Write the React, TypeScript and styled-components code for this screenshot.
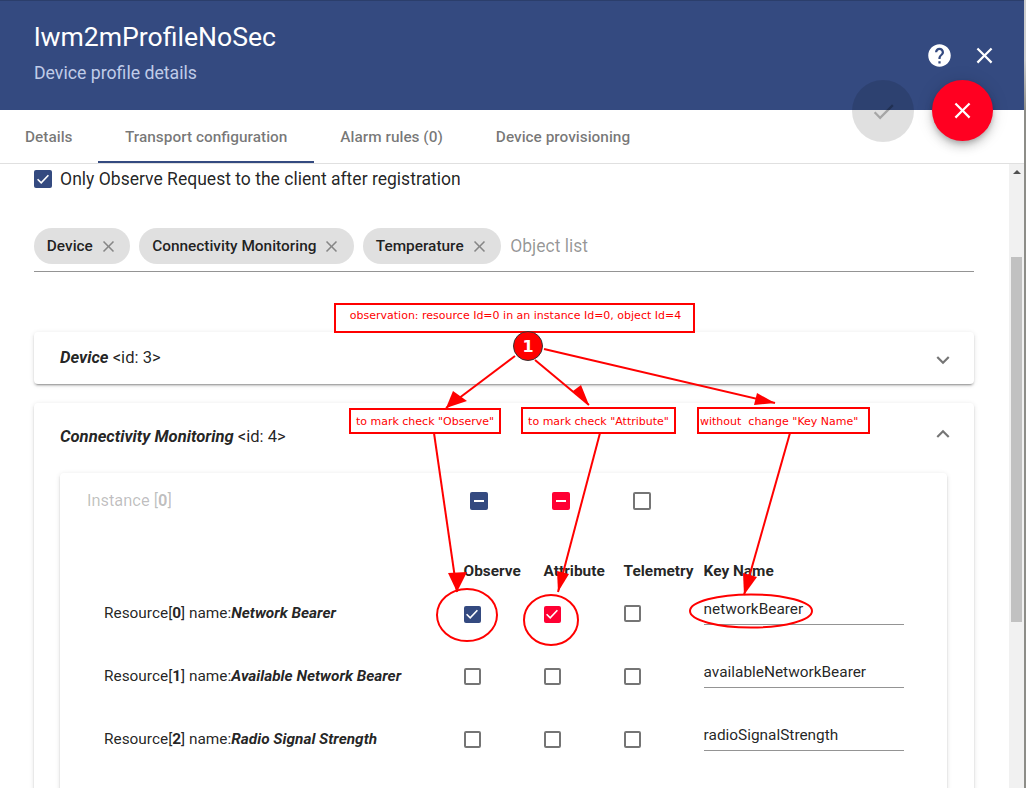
import styled, { createGlobalStyle } from "styled-components";
import { MdCheck, MdClose, MdExpandLess, MdExpandMore, MdHelp } from "react-icons/md";

const PRIMARY = "#344a80";
const ACCENT = "#ff0033";
const MARK = "#ff0000";

const GlobalStyle = createGlobalStyle`
  html, body {
    margin: 0;
    padding: 0;
    background: #fff;
    overflow: hidden;
  }
  * {
    box-sizing: border-box;
  }
`;

const Page = styled.div`
  position: relative;
  width: 1026px;
  height: 788px;
  display: flex;
  overflow: hidden;
  font-family: Roboto, "Liberation Sans", sans-serif;
  color: rgba(0, 0, 0, 0.87);
`;

const Dialog = styled.div`
  flex: 1;
  min-width: 0;
  display: flex;
  flex-direction: column;
`;

const EdgeStrip = styled.div`
  flex: 0 0 2px;
  background: linear-gradient(#cdcdcd 0, #cdcdcd 60px, #8d8d88 110px, #8d8d88 100%);
`;

const Header = styled.header`
  flex: 0 0 110px;
  background: ${PRIMARY};
  border-top: 1px solid #2b3e6b;
  display: flex;
  justify-content: space-between;
  padding: 19px 26px 0 34px;
  color: #fff;
`;

const Title = styled.h1`
  margin: 0;
  font-size: 26.6px;
  line-height: 34px;
  font-weight: 400;
`;

const Subtitle = styled.div`
  margin-top: 7px;
  font-size: 17.7px;
  line-height: 24px;
  color: #c0cce8;
`;

const HeaderActions = styled.div`
  display: flex;
  align-items: center;
  gap: 18px;
  height: 27px;
  margin-top: 22px;
  font-size: 27px;
`;

const Tabs = styled.nav`
  flex: 0 0 54px;
  display: flex;
  border-bottom: 1px solid #e0e0e0;
`;

const Tab = styled.div<{ $active?: boolean }>`
  height: 53px;
  padding: 2px 26.5px 0;
  display: flex;
  align-items: center;
  font-size: 15.4px;
  font-weight: 500;
  color: rgba(0, 0, 0, 0.54);
  border-bottom: 2px solid ${(p) => (p.$active ? PRIMARY : "transparent")};
  &:first-child {
    padding: 2px 26px 0 25px;
  }
`;

const Body = styled.main`
  flex: 1;
  min-height: 0;
  display: flex;
`;

const Content = styled.div`
  flex: 1;
  min-width: 0;
  overflow: hidden;
  padding: 6px 35px 0 34px;
`;

const Scrollbar = styled.div`
  flex: 0 0 15px;
  background: #f1f1f1;
  padding: 0 2px;
`;

const ScrollArrow = styled.div`
  width: 0;
  height: 0;
  margin: 6px auto 0;
  border-left: 4px solid transparent;
  border-right: 4px solid transparent;
  border-bottom: 4px solid #505050;
`;

const ScrollThumb = styled.div`
  height: 365px;
  margin-top: 83px;
  background: #c1c1c1;
`;

const CheckRow = styled.label`
  display: flex;
  align-items: center;
  gap: 8.5px;
  height: 18px;
  font-size: 17.55px;
`;

const Box = styled.span<{ $color?: string }>`
  flex: none;
  width: 17.6px;
  height: 17.6px;
  display: inline-flex;
  align-items: center;
  justify-content: center;
  border-radius: 2px;
  border: ${(p) => (p.$color ? "none" : "2px solid rgba(0, 0, 0, 0.54)")};
  background: ${(p) => p.$color ?? "transparent"};
`;

const Dash = styled.span`
  width: 10px;
  height: 2px;
  background: #fff;
`;

const Tick = () => (
  <svg width="14" height="14" viewBox="0 0 14 14" fill="none">
    <path d="M1.6 7.2 L5.2 10.8 L12.4 3.2" stroke="#fff" strokeWidth="1.6" />
  </svg>
);

const ChipField = styled.div`
  display: flex;
  align-items: center;
  gap: 9px;
  margin-top: 40px;
  padding-bottom: 7px;
  border-bottom: 1px solid rgba(0, 0, 0, 0.42);
`;

const Chip = styled.span`
  height: 36px;
  padding: 0 12.5px 0 12.8px;
  display: inline-flex;
  align-items: center;
  gap: 6px;
  border-radius: 18px;
  background: #e0e0e0;
  font-size: 15.4px;
  font-weight: 500;
  svg {
    font-size: 19px;
    color: rgba(0, 0, 0, 0.4);
  }
`;

const ChipPlaceholder = styled.span`
  font-size: 17.5px;
  color: rgba(0, 0, 0, 0.42);
`;

const Panel = styled.section<{ $first?: boolean }>`
  margin-top: ${(p) => (p.$first ? "60px" : "19px")};
  background: #fff;
  border-radius: 4px;
  box-shadow: 0 3px 1px -2px rgba(0, 0, 0, 0.2), 0 2px 2px 0 rgba(0, 0, 0, 0.14),
    0 1px 5px 0 rgba(0, 0, 0, 0.12);
`;

const PanelHeader = styled.div<{ $tall?: boolean }>`
  height: ${(p) => (p.$tall ? "66px" : "52px")};
  margin-bottom: ${(p) => (p.$tall ? "4px" : "0")};
  padding: 0 18px ${(p) => (p.$tall ? "0" : "2px")} 26px;
  display: flex;
  align-items: center;
  justify-content: space-between;
  font-size: 16.6px;
  svg {
    font-size: 26px;
    color: rgba(0, 0, 0, 0.54);
    margin: ${(p) => (p.$tall ? "0 0 4px" : "6px 0 0")};
  }
`;

const PanelName = styled.b`
  font-style: italic;
  font-weight: 700;
`;

const InnerCard = styled.div`
  margin: 0 27px 0 26px;
  height: 400px;
  border-radius: 4px;
  box-shadow: 0 3px 1px -2px rgba(0, 0, 0, 0.2), 0 2px 2px 0 rgba(0, 0, 0, 0.14),
    0 1px 5px 0 rgba(0, 0, 0, 0.12);
`;

const InstanceRow = styled.div`
  height: 56px;
  display: grid;
  grid-template-columns: 383px 82px 81px auto;
  align-items: center;
  padding-left: 27px;
  font-size: 16.4px;
  color: rgba(0, 0, 0, 0.26);
`;

const InstanceLabel = styled.span`
  padding-bottom: 2px;
`;

const ColumnHead = styled.div`
  display: grid;
  grid-template-columns: 80px 80px 80px 200px;
  margin: 30px 0 0 403.6px;
  height: 24px;
  align-items: center;
  font-size: 15.4px;
  font-weight: 700;
`;

const ResourceRow = styled.div`
  display: grid;
  grid-template-columns: 359.6px 80px 80px 80px 200px;
  align-items: center;
  height: 63px;
  padding-left: 44px;
  font-size: 15.4px;
`;

const ResourceLabel = styled.span`
  padding-bottom: 4px;
`;

const Boxed = styled.span`
  padding-top: 2px;
`;

const KeyInput = styled.div`
  height: 25px;
  margin-top: -5px;
  line-height: 19px;
  font-size: 15.4px;
  border-bottom: 1px solid rgba(0, 0, 0, 0.42);
`;

const Fab = styled.div<{ $size: number; $left: number; $disabled?: boolean }>`
  position: absolute;
  top: 80px;
  left: ${(p) => p.$left}px;
  width: ${(p) => p.$size}px;
  height: ${(p) => p.$size}px;
  border-radius: 50%;
  display: flex;
  align-items: center;
  justify-content: center;
  font-size: 27px;
  background: ${(p) => (p.$disabled ? "rgba(0, 0, 0, 0.12)" : "#ff0021")};
  color: ${(p) => (p.$disabled ? "rgba(0, 0, 0, 0.26)" : "#fff")};
  box-shadow: ${(p) =>
    p.$disabled
      ? "none"
      : "0 3px 5px -1px rgba(0,0,0,.2), 0 6px 10px 0 rgba(0,0,0,.14), 0 1px 18px 0 rgba(0,0,0,.12)"};
`;

const Note = styled.div<{
  $x: number;
  $y: number;
  $w: number;
  $h: number;
  $raise?: number;
  $drop?: number;
  $pad?: number;
  $start?: boolean;
}>`
  position: absolute;
  left: ${(p) => p.$x}px;
  top: ${(p) => p.$y}px;
  width: ${(p) => p.$w}px;
  height: ${(p) => p.$h}px;
  padding: ${(p) => p.$drop ?? 0}px 0 ${(p) => p.$raise ?? 0}px ${(p) => p.$pad ?? 0}px;
  border: 2px solid ${MARK};
  background: #fff;
  display: flex;
  align-items: center;
  justify-content: ${(p) => (p.$start ? "flex-start" : "center")};
  font-family: "DejaVu Sans", sans-serif;
  font-size: 11px;
  color: ${MARK};
  white-space: pre;
`;

const NoteNumber = styled.div`
  position: absolute;
  left: 513px;
  top: 331px;
  width: 30px;
  height: 30px;
  border-radius: 50%;
  border: 1.5px solid #333;
  background: ${MARK};
  color: #fff;
  display: flex;
  align-items: center;
  justify-content: center;
  font-family: "DejaVu Sans", sans-serif;
  font-size: 16px;
  font-weight: 700;
`;

const Overlay = styled.svg`
  position: absolute;
  inset: 0;
  pointer-events: none;
`;

// line start, tip, and the two corners of the arrow head
const arrows = [
  { from: [515, 356], to: [446, 408], head: "453,391 467,401" },
  { from: [535, 360], to: [589, 405], head: "573,391 581,385" },
  { from: [544, 349], to: [775, 403], head: "757,393 754,405" },
  { from: [434, 433], to: [457, 592], head: "448,573 467,572" },
  { from: [600, 433], to: [558, 592], head: "557,571 569,574" },
  { from: [790, 433], to: [744, 595], head: "743,573 757,577" },
];

const rings = [
  { cx: 467, cy: 615, rx: 30, ry: 26 },
  { cx: 551, cy: 620, rx: 27, ry: 25 },
  { cx: 751, cy: 611, rx: 61, ry: 16.5 },
];

const resources = [
  { id: 0, name: "Network Bearer", key: "networkBearer", checked: true },
  { id: 1, name: "Available Network Bearer", key: "availableNetworkBearer", checked: false },
  { id: 2, name: "Radio Signal Strength", key: "radioSignalStrength", checked: false },
];

export default function App() {
  return (
    <Page>
      <GlobalStyle />
      <Dialog>
        <Header>
          <div>
            <Title>lwm2mProfileNoSec</Title>
            <Subtitle>Device profile details</Subtitle>
          </div>
          <HeaderActions>
            <MdHelp />
            <MdClose />
          </HeaderActions>
        </Header>
        <Tabs>
          <Tab>Details</Tab>
          <Tab $active>Transport configuration</Tab>
          <Tab>Alarm rules (0)</Tab>
          <Tab>Device provisioning</Tab>
        </Tabs>
        <Body>
          <Content>
            <CheckRow>
              <Box $color={PRIMARY}>
                <Tick />
              </Box>
              Only Observe Request to the client after registration
            </CheckRow>
            <ChipField>
              {["Device", "Connectivity Monitoring", "Temperature"].map((name) => (
                <Chip key={name}>
                  {name}
                  <MdClose />
                </Chip>
              ))}
              <ChipPlaceholder>Object list</ChipPlaceholder>
            </ChipField>
            <Panel $first>
              <PanelHeader>
                <span>
                  <PanelName>Device</PanelName> &lt;id: 3&gt;
                </span>
                <MdExpandMore />
              </PanelHeader>
            </Panel>
            <Panel>
              <PanelHeader $tall>
                <span>
                  <PanelName>Connectivity Monitoring</PanelName> &lt;id: 4&gt;
                </span>
                <MdExpandLess />
              </PanelHeader>
              <InnerCard>
                <InstanceRow>
                  <InstanceLabel>
                    Instance [<b>0</b>]
                  </InstanceLabel>
                  <Box $color={PRIMARY}>
                    <Dash />
                  </Box>
                  <Box $color={ACCENT}>
                    <Dash />
                  </Box>
                  <Box />
                </InstanceRow>
                <ColumnHead>
                  <span>Observe</span>
                  <span>Attribute</span>
                  <span>Telemetry</span>
                  <span>Key Name</span>
                </ColumnHead>
                {resources.map((r) => (
                  <ResourceRow key={r.id}>
                    <ResourceLabel>
                      Resource[<b>{r.id}</b>] name:
                      <PanelName>{r.name}</PanelName>
                    </ResourceLabel>
                    <Boxed>
                      <Box $color={r.checked ? PRIMARY : undefined}>{r.checked && <Tick />}</Box>
                    </Boxed>
                    <Boxed>
                      <Box $color={r.checked ? ACCENT : undefined}>{r.checked && <Tick />}</Box>
                    </Boxed>
                    <Boxed>
                      <Box />
                    </Boxed>
                    <KeyInput>{r.key}</KeyInput>
                  </ResourceRow>
                ))}
              </InnerCard>
            </Panel>
          </Content>
          <Scrollbar>
            <ScrollArrow />
            <ScrollThumb />
          </Scrollbar>
        </Body>
      </Dialog>
      <EdgeStrip />

      <Fab $size={62} $left={852} $disabled>
        <MdCheck />
      </Fab>
      <Fab $size={61} $left={932}>
        <MdClose />
      </Fab>

      <Overlay width="1026" height="788" viewBox="0 0 1026 788">
        {arrows.map((a) => (
          <g key={a.to.join()}>
            <line
              x1={a.from[0]}
              y1={a.from[1]}
              x2={a.to[0]}
              y2={a.to[1]}
              stroke={MARK}
              strokeWidth="2"
            />
            <polygon points={`${a.to[0]},${a.to[1]} ${a.head}`} fill={MARK} />
          </g>
        ))}
        {rings.map((r) => (
          <ellipse key={r.cx} {...r} fill="none" stroke={MARK} strokeWidth="2" />
        ))}
      </Overlay>

      <Note $x={334} $y={303} $w={361} $h={30} $raise={5} $pad={2}>
        observation: resource Id=0 in an instance Id=0, object Id=4
      </Note>
      <Note $x={349} $y={408} $w={152} $h={26}>
        to mark check "Observe"
      </Note>
      <Note $x={521} $y={407} $w={155} $h={27} $drop={1}>
        to mark check "Attribute"
      </Note>
      <Note $x={697} $y={407} $w={173} $h={27} $drop={1} $start $pad={1}>
        without  change "Key Name"
      </Note>
      <NoteNumber>1</NoteNumber>
    </Page>
  );
}
